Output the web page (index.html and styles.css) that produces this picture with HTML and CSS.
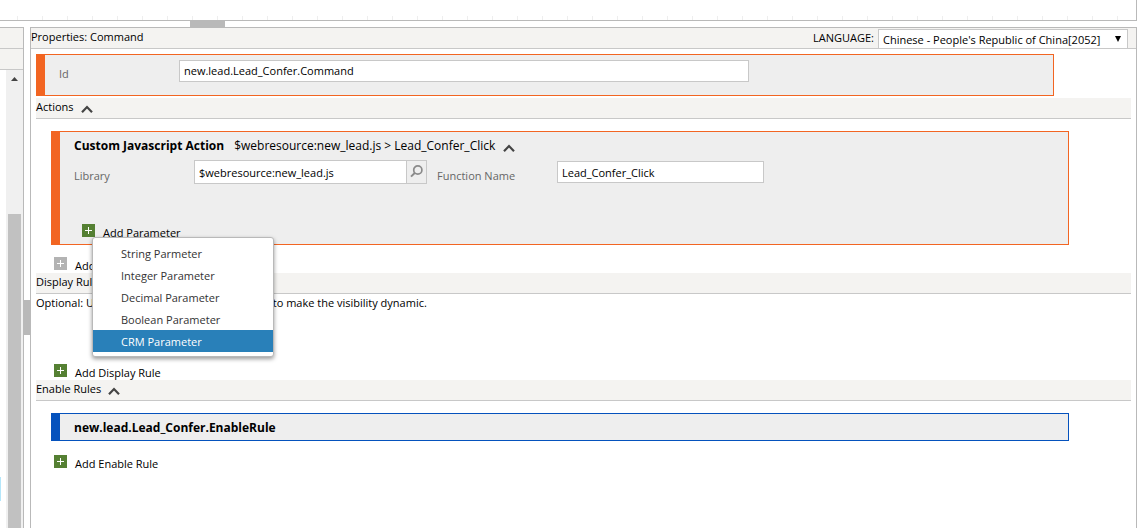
FILE: index.html
```html
<!DOCTYPE html>
<html lang="en">
<head>
    <meta charset="UTF-8">
    <meta name="viewport" content="width=device-width, initial-scale=1.0">
    <title>Ribbon Workbench</title>
    <link rel="stylesheet" href="styles.css">
</head>
<body>
    <!-- shared icons -->
    <svg class="sprite" aria-hidden="true">
        <symbol id="icon-up" viewBox="0 0 12 8">
            <path d="M1 7.2 L6 2 L11 7.2" fill="none" stroke="#444" stroke-width="2.2"/>
        </symbol>
        <symbol id="icon-add" viewBox="0 0 13 13">
            <rect width="13" height="13" fill="currentColor"/>
            <path d="M3 6.5 H10 M6.5 3 V10" stroke="#fff" stroke-width="1"/>
        </symbol>
        <symbol id="icon-search" viewBox="0 0 13 13">
            <circle cx="7.8" cy="5" r="4.1" fill="none" stroke="#8a8a8a" stroke-width="1.7"/>
            <path d="M5 7.8 L1 11.6" stroke="#8a8a8a" stroke-width="2"/>
        </symbol>
    </svg>

    <div class="ribbon"></div>
    <div class="splitter-row"><div class="grip"></div></div>

    <div class="workspace">
        <aside class="tree">
            <div class="tree-bar"></div>
            <div class="tree-bar"></div>
            <div class="tree-body">
                <div class="tree-list"><div class="tree-selected"></div></div>
                <div class="scrollbar">
                    <svg class="scroll-up" width="7" height="4" viewBox="0 0 7 4"><path d="M0 4 L3.5 0 L7 4 Z" fill="#444"/></svg>
                    <div class="scroll-thumb"></div>
                </div>
            </div>
        </aside>
        <div class="splitter-col"><div class="grip"></div></div>

        <main class="properties">
            <header class="properties-header">
                <span class="title">Properties: Command</span>
                <label for="language">LANGUAGE:</label>
                <div class="language">
                    <select id="language">
                        <option>Chinese - People's Republic of China[2052]</option>
                    </select>
                    <svg width="6" height="6" viewBox="0 0 6 6"><path d="M0 0 H6 L3 6 Z" fill="#000"/></svg>
                </div>
            </header>

            <div class="properties-body">
                <section class="card card-id">
                    <div class="field-row">
                        <label for="command-id">Id</label>
                        <input type="text" id="command-id" class="input-id" value="new.lead.Lead_Confer.Command">
                    </div>
                </section>

                <div class="section-bar">
                    <span>Actions</span>
                    <button class="toggle" aria-label="Collapse"><svg width="12" height="8"><use href="#icon-up"/></svg></button>
                </div>
                <div class="section-content">
                    <section class="card card-action">
                        <div class="card-title">
                            <b>Custom Javascript Action</b>
                            <span>$webresource:new_lead.js &gt; Lead_Confer_Click</span>
                            <button class="toggle" aria-label="Collapse"><svg width="12" height="8"><use href="#icon-up"/></svg></button>
                        </div>
                        <div class="field-row">
                            <label for="library">Library</label>
                            <div class="lookup">
                                <input type="text" id="library" value="$webresource:new_lead.js">
                                <button aria-label="Search"><svg width="13" height="13"><use href="#icon-search"/></svg></button>
                            </div>
                            <label for="function-name">Function Name</label>
                            <input type="text" id="function-name" class="input-function" value="Lead_Confer_Click">
                        </div>
                        <div class="menu-anchor">
                            <button class="add"><svg width="13" height="13"><use href="#icon-add"/></svg><span>Add Parameter</span></button>
                            <ul class="menu">
                                <li><button>String Parmeter</button></li>
                                <li><button>Integer Parameter</button></li>
                                <li><button>Decimal Parameter</button></li>
                                <li><button>Boolean Parameter</button></li>
                                <li><button class="active">CRM Parameter</button></li>
                            </ul>
                        </div>
                    </section>
                    <button class="add add-disabled"><svg width="13" height="13"><use href="#icon-add"/></svg><span>Add Action</span></button>
                </div>

                <div class="section-bar">
                    <span>Display Rules</span>
                    <button class="toggle" aria-label="Collapse"><svg width="12" height="8"><use href="#icon-up"/></svg></button>
                </div>
                <p class="hint">Optional: Use Display Rules for this command to make the visibility dynamic.</p>
                <div class="section-content section-empty">
                    <button class="add"><svg width="13" height="13"><use href="#icon-add"/></svg><span>Add Display Rule</span></button>
                </div>

                <div class="section-bar">
                    <span>Enable Rules</span>
                    <button class="toggle" aria-label="Collapse"><svg width="12" height="8"><use href="#icon-up"/></svg></button>
                </div>
                <div class="section-content">
                    <section class="card card-rule">
                        <b>new.lead.Lead_Confer.EnableRule</b>
                    </section>
                    <button class="add"><svg width="13" height="13"><use href="#icon-add"/></svg><span>Add Enable Rule</span></button>
                </div>
            </div>
        </main>
    </div>
</body>
</html>
```

FILE: styles.css
```css
* {
    box-sizing: border-box;
}

body {
    display: flex;
    flex-direction: column;
    height: 100vh;
    margin: 0;
    overflow: hidden;
    background-color: #fff;
    color: #000;
    font-family: "Open Sans", "Noto Sans", sans-serif;
    font-size: 11px;
    line-height: 16px;
}

button, input, select {
    font: inherit;
    color: inherit;
    margin: 0;
}

button {
    padding: 0;
    border: none;
    background: none;
}

svg {
    display: block;
    flex: none;
}

.sprite {
    position: absolute;
    width: 0;
    height: 0;
}

/* Ribbon area and splitters */
.ribbon {
    flex: none;
    height: 21px;
    border-right: 1px solid #b9b9b9;
    border-bottom: 1px solid #b9b9b9;
    background: repeating-linear-gradient(to right, transparent 0 17px, #eee 17px 18px, transparent 18px 25px) bottom / 100% 4px no-repeat;
}

.splitter-row {
    flex: none;
    height: 6px;
    padding-left: 190px;
}

.splitter-row .grip {
    width: 35px;
    height: 6px;
    background-color: #b9b9b9;
}

.splitter-col {
    display: flex;
    align-items: center;
    flex: none;
    width: 6px;
}

.splitter-col .grip {
    width: 6px;
    height: 35px;
    margin-top: 80px;
    background-color: #b9b9b9;
}

.workspace {
    display: flex;
    flex: 1;
    min-height: 0;
}

/* Solution tree */
.tree {
    display: flex;
    flex-direction: column;
    flex: none;
    width: 24px;
    border-top: 1px solid #b9b9b9;
    border-right: 1px solid #b9b9b9;
}

.tree-bar {
    height: 21px;
    border-bottom: 1px solid #c8c8c8;
    background-color: #f4f3f1;
}

.tree-body {
    display: flex;
    flex: 1;
}

.tree-list {
    flex: 1;
    padding-top: 407px;
}

.tree-selected {
    width: 1px;
    height: 24px;
    background-color: #b4e6fa;
}

.scrollbar {
    display: flex;
    flex-direction: column;
    width: 17px;
    padding: 7px 2px 0;
    background-color: #f0f0f0;
}

.scroll-up {
    align-self: center;
}

.scroll-thumb {
    flex: 1;
    margin-top: 133px;
    background-color: #c1c1c1;
}

/* Properties panel */
.properties {
    flex: 1;
    min-width: 0;
    border: 1px solid #b9b9b9;
    border-bottom: none;
}

.properties-header {
    display: flex;
    height: 21px;
    padding-right: 8px;
    border-bottom: 1px solid #c8c8c8;
    background-color: #f4f3f1;
}

.properties-header .title {
    flex: 1;
    line-height: 18px;
}

.properties-header label {
    margin-right: 4px;
    line-height: 20px;
}

.language {
    display: flex;
    align-items: center;
    width: 250px;
    height: 20px;
    margin-top: 1px;
    padding-right: 6px;
    border: 1px solid #c8c8c8;
    background-color: #fff;
}

.language select {
    flex: 1;
    min-width: 0;
    padding: 2px 0 0 4px;
    border: none;
    background: none;
    appearance: none;
}

.properties-body {
    padding: 5px 5px 0;
}

.section-bar {
    display: flex;
    align-items: flex-start;
    gap: 7px;
    height: 21px;
    border-bottom: 1px solid #c8c8c8;
    background-color: #f4f3f1;
    line-height: 18px;
}

.section-bar .toggle {
    padding-top: 7px;
}

.section-content {
    padding-top: 12px;
}

.card {
    width: 93%;
    padding: 0 14px;
    border: 1px solid #f26522;
    border-left-width: 9px;
    background-color: #eee;
}

.card-id {
    height: 42px;
    margin-bottom: 2px;
    padding-top: 4px;
}

.card-action, .card-rule {
    margin-left: 15px;
    font-size: 12px;
}

.card-action {
    height: 114px;
    padding-top: 6px;
}

.card-rule {
    height: 28px;
    margin-bottom: 14px;
    border-color: #0552bd;
    line-height: 28px;
}

.card-title {
    display: flex;
    align-items: center;
    margin-bottom: 6px;
}

.card-title span {
    margin: 0 8px 0 10px;
}

.card-title .toggle {
    padding-top: 4px;
}

.field-row {
    display: flex;
    align-items: center;
    font-size: 11px;
}

.field-row label {
    flex: none;
    width: 120px;
    padding-top: 7px;
    color: #666;
}

.field-row input {
    min-width: 0;
    height: 22px;
    padding: 0 4px;
    border: 1px solid #c8c8c8;
    background-color: #fff;
}

.field-row .input-id {
    flex: 0 1 570px;
}

.field-row .input-function {
    flex: 0 1 207px;
}

.field-row .lookup {
    display: flex;
    flex: 0 1 233px;
    min-width: 0;
    margin-right: 10px;
}

.field-row .lookup input {
    flex: 1;
    height: 24px;
}

.lookup button {
    flex: none;
    width: 20px;
    padding: 0 3px 2px;
    border: 1px solid #c8c8c8;
    border-left: none;
}

/* Add buttons */
.add {
    display: flex;
    align-items: flex-start;
    gap: 8px;
    height: 17px;
    color: #558033;
    font-size: 11px;
}

.add span {
    padding-top: 1px;
    color: #000;
}

.add-disabled {
    color: #b3b3b3;
}

.section-content > .add {
    margin: 0 0 -1px 18px;
}

.card-action {
    margin-bottom: 12px;
}

.section-empty {
    padding-top: 53px;
}

.hint {
    margin: 1px 0 0;
}

/* Parameter type menu */
.menu-anchor {
    position: relative;
    width: max-content;
    margin: 40px 0 0 8px;
    font-size: 11px;
}

.menu {
    position: absolute;
    top: 13px;
    left: 10px;
    z-index: 1;
    width: 182px;
    margin: 0;
    padding: 4px 0;
    border: 1px solid #b9b9b9;
    border-radius: 3px;
    background-color: #fff;
    box-shadow: 0 2px 4px rgba(0, 0, 0, 0.4);
    list-style: none;
}

.menu button {
    display: block;
    width: 100%;
    height: 22px;
    padding: 2px 28px 0;
    color: #333;
    text-align: left;
}

.menu .active {
    background-color: #2980b9;
    color: #fff;
}
```
